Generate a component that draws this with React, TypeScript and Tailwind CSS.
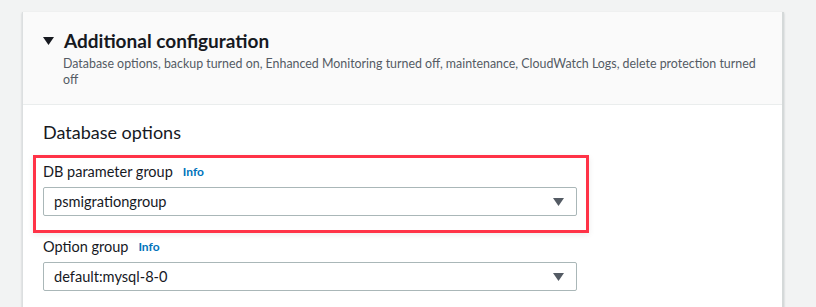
interface SelectFieldProps {
  label: string;
  value: string;
}

function Caret() {
  return (
    <svg width="11" height="8" viewBox="0 0 11 8" className="shrink-0">
      <path d="M0 0 H11 L5.5 8 Z" fill="#545b64" />
    </svg>
  );
}

function SelectField({ label, value }: SelectFieldProps) {
  return (
    <div className="flex flex-col">
      <div className="flex h-[20px] items-center gap-[10px]">
        <span className="text-[14.5px] text-[#16191f]">{label}</span>
        <span className="text-[12px] font-bold text-[#0073bb]">Info</span>
      </div>
      <div className="mt-[5px] flex h-[29px] w-[534px] items-center justify-between rounded-[2px] border border-[#aab7b8] bg-white pl-[10px] pr-[12px]">
        <span className="text-[14.6px] text-[#16191f]">{value}</span>
        <Caret />
      </div>
    </div>
  );
}

export default function App() {
  return (
    <div
      className="h-[307px] w-[816px] overflow-hidden bg-[#f2f3f3] pl-[22px] pt-[12px]"
      style={{ fontFamily: "Lato, 'Open Sans', sans-serif" }}
    >
      <div className="h-[320px] w-[762px] border-l border-r-2 border-l-[#dcdfe0] border-r-[#d5d9d9] bg-white shadow-[0_1px_2px_rgba(0,28,36,0.2)]">
        {/* header */}
        <div className="h-[93px] border-b border-[#eaeded] bg-[#fafafa] pl-[20px] pr-[20px] pt-[18px]">
          <div className="flex items-center gap-[10px]">
            <svg width="11" height="8" viewBox="0 0 11 8">
              <path d="M0 0 H11 L5.5 8 Z" fill="#16191f" />
            </svg>
            <h2 className="text-[19px] font-bold leading-[22px] text-[#16191f]">Additional configuration</h2>
          </div>
          <p className="ml-[20px] mt-[4px] text-[12.4px] leading-[16px] text-[#545b64]">
            Database options, backup turned on, Enhanced Monitoring turned off, maintenance, CloudWatch Logs, delete protection turned off
          </p>
        </div>

        {/* body */}
        <div className="pl-[20px] pt-[16px]">
          <h3 className="text-[18px] leading-[22px] text-[#16191f]">Database options</h3>
          <div className="ml-[-10px] mt-[12px] w-[556px] border-[3px] border-[#ff3347] pb-[14px] pl-[7px] pt-[4px] shadow-[0_2px_6px_rgba(0,0,0,0.08)]">
            <SelectField label="DB parameter group" value="psmigrationgroup" />
          </div>
          <div className="mt-[4px]">
            <SelectField label="Option group" value="default:mysql-8-0" />
          </div>
        </div>
      </div>
    </div>
  );
}
